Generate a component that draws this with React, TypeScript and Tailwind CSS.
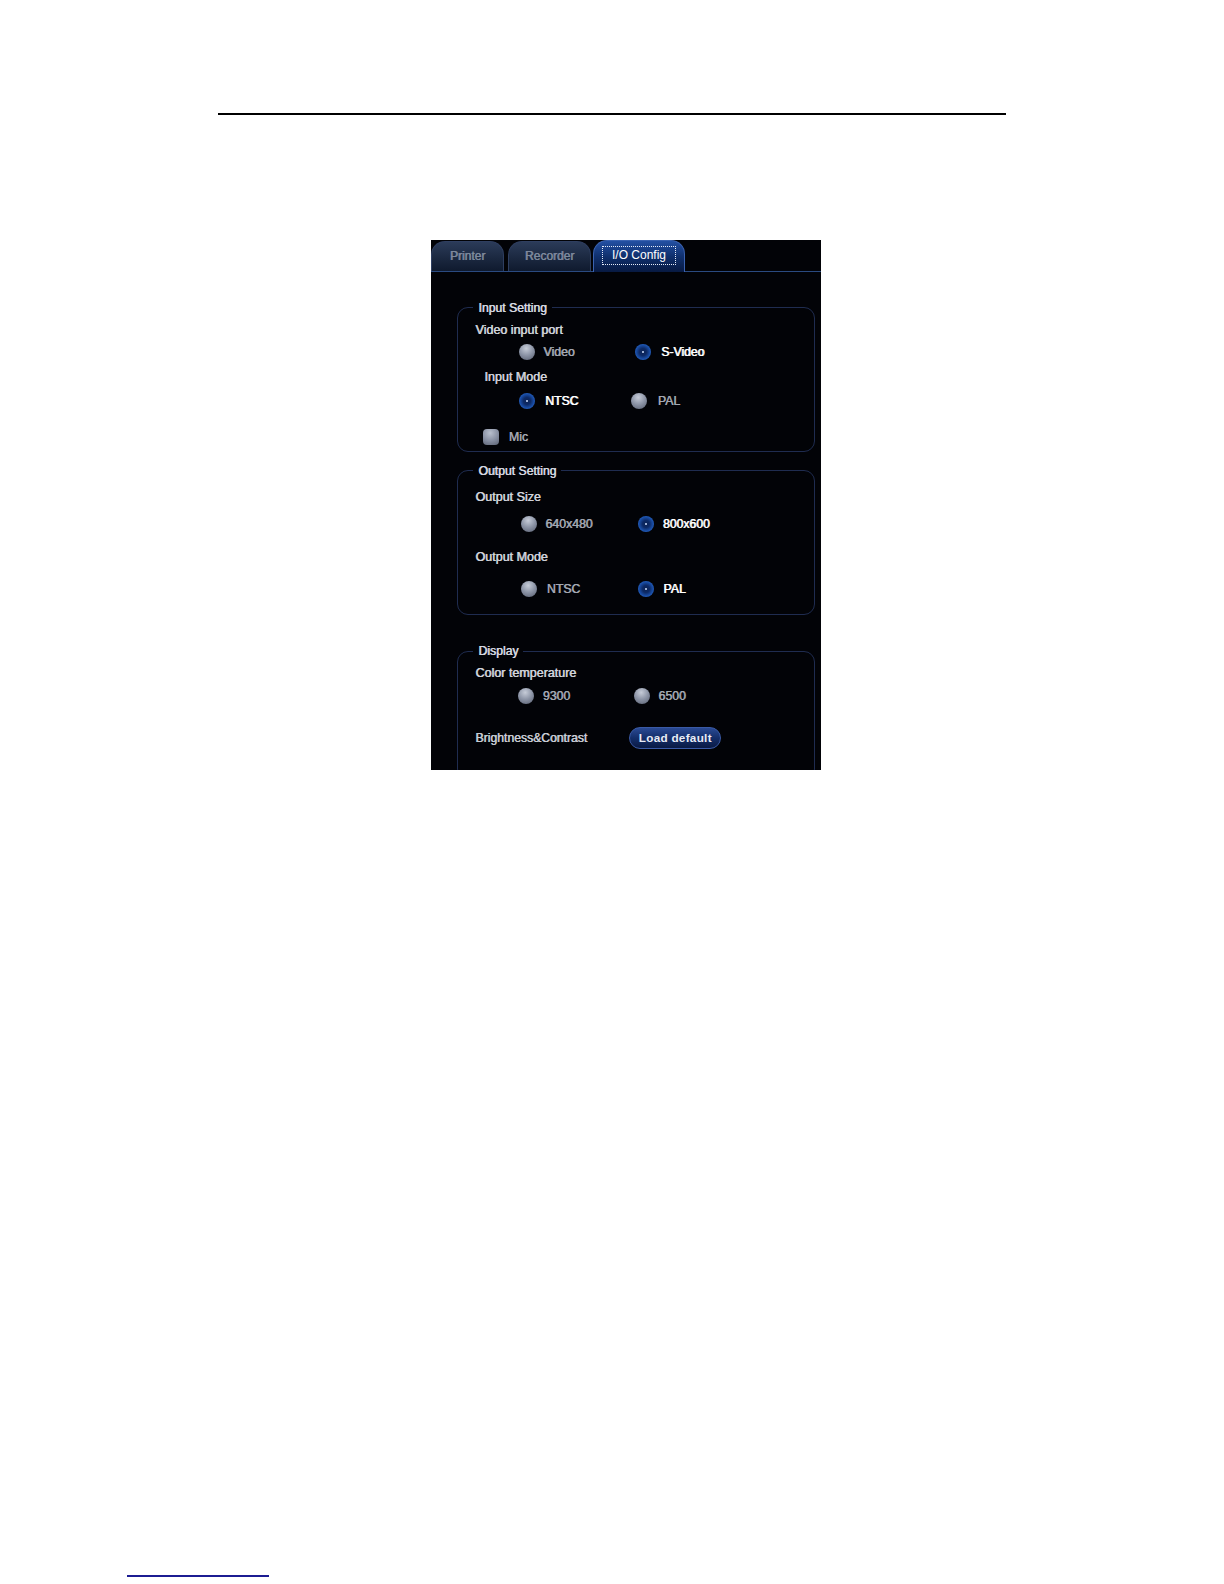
import React from "react";

const font = "font-['Liberation_Sans',Arial,sans-serif]";
const bolded = "[text-shadow:0.6px_0_0_currentColor]";
const strong = "[text-shadow:0.8px_0_0_currentColor]";

function Radio({ on }: { on?: boolean }) {
  if (on) {
    return (
      <span className="relative flex h-4 w-4 shrink-0 items-center justify-center rounded-full bg-[radial-gradient(circle_at_50%_50%,#0a2254_0%,#0d2a66_32%,#1a4fa8_62%,#2f6ed2_84%,#1a3c86_100%)]">
        <span className="h-[2px] w-[2px] rounded-full bg-[#cfe0ff]" />
      </span>
    );
  }
  return (
    <span className="h-4 w-4 shrink-0 rounded-full bg-[radial-gradient(circle_at_45%_28%,#c6ccd8_0%,#8c94a6_48%,#565d6e_100%)]" />
  );
}

interface OptionProps {
  label: string;
  on?: boolean;
  gap: string;
}

function Option({ label, on, gap }: OptionProps) {
  return (
    <div className={`flex items-center ${gap}`}>
      <Radio on={on} />
      <span
        className={
          on
            ? `text-[12.2px] leading-4 text-white ${strong}`
            : `text-[12.3px] leading-4 text-[#a3a8b2] ${bolded}`
        }
      >
        {label}
      </span>
    </div>
  );
}

function Group({
  title,
  className,
  children,
}: {
  title: string;
  className?: string;
  children: React.ReactNode;
}) {
  return (
    <fieldset
      className={`ml-[26px] w-[358px] rounded-[11px] border border-[#1f2c50] pl-[17.3px] ${className ?? ""}`}
    >
      <legend
        className={`-ml-[2px] px-[5px] text-[12.2px] leading-[14px] text-[#d6d9e0] ${bolded}`}
      >
        {title}
      </legend>
      {children}
    </fieldset>
  );
}

function Heading({ children, className }: { children: React.ReactNode; className?: string }) {
  return (
    <div className={`h-4 text-[12.5px] leading-4 text-[#d0d3da] ${bolded} ${className ?? ""}`}>
      {children}
    </div>
  );
}

function Tab({ label, active, width }: { label: string; active?: boolean; width: string }) {
  if (active) {
    return (
      <div
        className={`${width} -mb-px flex h-[32px] items-center justify-center rounded-t-[14px] border border-b-0 border-[#3a62b0] bg-linear-to-b from-[#2350a4] via-[#10306e] to-[#081a42] pb-[2px]`}
      >
        <span className="border border-dotted border-[#e6ecf8] px-[8.5px] text-[12px] leading-[17px] text-white">
          {label}
        </span>
      </div>
    );
  }
  return (
    <div
      className={`${width} flex h-[30px] items-center justify-center rounded-t-[14px] border border-b-0 border-[#2e3e60] bg-linear-to-b from-[#2b3b58] to-[#0f1a2e] pb-[2px] text-[12px] text-[#7d889c] ${bolded}`}
    >
      {label}
    </div>
  );
}

export default function App() {
  return (
    <div className={`h-[1584px] overflow-hidden bg-white ${font}`}>
      {/* page rule */}
      <div className="pt-[113px]">
        <div className="ml-[218px] h-[1.5px] w-[788px] bg-black" />
      </div>

      {/* I/O config panel */}
      <div className="ml-[431px] mt-[125.5px] h-[530px] w-[390px] overflow-hidden bg-[#020307]">
        {/* Tabs */}
        <div className="flex h-[32px] items-end border-b border-[#2a4a80]">
          <Tab label="Printer" width="w-[73px]" />
          <div className="w-[4px]" />
          <Tab label="Recorder" width="w-[83px]" />
          <div className="w-[2px]" />
          <Tab label="I/O Config" width="w-[92px]" active />
        </div>

        {/* Input Setting */}
        <Group title="Input Setting" className="mt-[28.5px] pb-[6px]">
          <Heading className="mt-[7.6px]">Video input port</Heading>
          <div className="ml-[44px] mt-[6.4px] flex">
            <div className="w-[115.7px]">
              <Option label="Video" gap="gap-[8px]" />
            </div>
            <Option label="S-Video" on gap="gap-[10px]" />
          </div>
          <Heading className="ml-[9px] mt-[9px]">Input Mode</Heading>
          <div className="ml-[43.4px] mt-[7.3px] flex">
            <div className="w-[112.3px]">
              <Option label="NTSC" on gap="gap-[10.3px]" />
            </div>
            <Option label="PAL" gap="gap-[10.7px]" />
          </div>
          <div className="ml-[7.4px] mt-[20px] flex items-center gap-[10px]">
            <span className="h-4 w-4 rounded-[4px] bg-[radial-gradient(circle_at_45%_25%,#b9c0ce_0%,#858da0_55%,#5a6172_100%)]" />
            <span className={`text-[12.3px] leading-4 text-[#a3a8b2] ${bolded}`}>Mic</span>
          </div>
        </Group>

        {/* Output Setting */}
        <Group title="Output Setting" className="mt-[12px] pb-[17px]">
          <Heading className="mt-[11px]">Output Size</Heading>
          <div className="ml-[45.7px] mt-[11.3px] flex">
            <div className="w-[116.7px]">
              <Option label="640x480" gap="gap-[8.3px]" />
            </div>
            <Option label="800x600" on gap="gap-[9px]" />
          </div>
          <Heading className="mt-[17.3px]">Output Mode</Heading>
          <div className="ml-[45.7px] mt-[15.7px] flex">
            <div className="w-[117.3px]">
              <Option label="NTSC" gap="gap-[9.7px]" />
            </div>
            <Option label="PAL" on gap="gap-[9px]" />
          </div>
        </Group>

        {/* Display */}
        <Group title="Display" className="mt-[29px] pb-[30px]">
          <Heading className="mt-[6.7px]">Color temperature</Heading>
          <div className="ml-[43px] mt-[7.3px] flex">
            <div className="w-[116px]">
              <Option label="9300" gap="gap-[8.4px]" />
            </div>
            <Option label="6500" gap="gap-[8px]" />
          </div>
          <div className="mt-[23px] flex h-[22px] items-center">
            <span className={`-mt-px w-[154px] text-[12.2px] leading-4 text-[#c8ccd4] ${bolded}`}>
              Brightness&amp;Contrast
            </span>
            <button className="flex h-[22px] w-[92px] items-center justify-center rounded-full border border-[#3a5aa6] bg-linear-to-b from-[#2a4a94] via-[#142e6a] to-[#0a1a44] text-[11.7px] font-bold tracking-[0.3px] text-[#e8ecf6]">
              Load default
            </button>
          </div>
        </Group>
      </div>

      {/* footer link rule */}
      <div className="ml-[127px] mt-[805px] h-[2px] w-[142px] bg-[#1c1c92]" />
    </div>
  );
}
